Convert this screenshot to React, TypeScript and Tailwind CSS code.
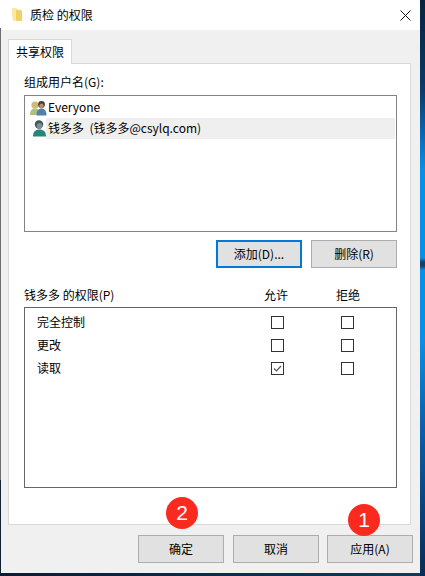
const font = { fontFamily: '"Noto Sans CJK SC", "Noto Sans", sans-serif' };

function FolderIcon() {
  return (
    <svg width="10" height="14" viewBox="0 0 10 14" className="shrink-0">
      <path d="M0 0h4l1 2h4l1 1v10H1z" fill="#f3cf68" />
      <path d="M0 0h4v13H1z" fill="#fbe7a6" />
    </svg>
  );
}

function EveryoneIcon() {
  return (
    <svg width="17" height="16" viewBox="0 0 17 16" className="shrink-0">
      <circle cx="5" cy="5" r="3.6" fill="#d3b873" />
      <path d="M0 15c0-5 2-6.500 5-6.500S10 10 10 15z" fill="#aebf80" />
      <circle cx="11.500" cy="4.500" r="3.400" fill="#3f4044" />
      <ellipse cx="11.500" cy="6" rx="2.200" ry="2.400" fill="#c08a5c" />
      <path d="M6.500 15.500c0-5 2-7 5-7s5 2 5 7z" fill="#4f81ad" />
    </svg>
  );
}

function UserIcon() {
  return (
    <svg width="13" height="17" viewBox="0 0 13 17" className="shrink-0">
      <circle cx="6" cy="4.500" r="4.200" fill="#3e5560" />
      <ellipse cx="6.500" cy="6" rx="2.800" ry="3" fill="#7f8f8c" />
      <path d="M0 16.500c0-5 2.500-7 6.500-7s6.500 2 6.500 7z" fill="#27857c" />
    </svg>
  );
}

function Checkbox({ checked }: { checked?: boolean }) {
  return (
    <div className="flex h-[13px] w-[13px] shrink-0 items-center justify-center border border-[#333333] bg-white">
      {checked && (
        <svg width="11" height="11" viewBox="0 0 11 11">
          <path d="M2 5.500 4.500 8 9 3" fill="none" stroke="#555555" strokeWidth="1.200" />
        </svg>
      )}
    </div>
  );
}

function Button({ label, focused }: { label: string; focused?: boolean }) {
  return (
    <div
      className={
        focused
          ? 'flex h-[28px] w-[86px] items-center justify-center border-2 border-[#0078d7] bg-[#e1e1e1] text-[12px] text-black'
          : 'flex h-[28px] w-[86px] items-center justify-center border border-[#adadad] bg-[#e1e1e1] text-[12px] text-black'
      }
    >
      {label}
    </div>
  );
}

function Badge({ n, className }: { n: string; className: string }) {
  return (
    <div
      className={`absolute flex h-[32px] w-[32px] items-center justify-center rounded-full bg-[#fb2a1f] font-['Liberation_Sans',sans-serif] text-[21px] text-white ${className}`}
    >
      {n}
    </div>
  );
}

const rows = [
  { name: '完全控制', checked: false },
  { name: '更改', checked: false },
  { name: '读取', checked: true },
];

export default function App() {
  return (
    <div className="relative flex h-[576px] w-[425px] overflow-hidden" style={font}>
      <div className="h-full w-[1px] bg-[linear-gradient(to_bottom,#ffffff_0,#ffffff_28px,#6e6e6e_28px,#6e6e6e_480px,#16243a_480px,#0c1c30_100%)]" />

      <div className="flex w-[419px] flex-col">
        <div className="flex h-[573px] flex-col bg-[#f0f0f0]">
          <div className="flex h-[30px] items-center bg-white pl-[11px] pr-[9px]">
            <FolderIcon />
            <span className="ml-[8px] whitespace-pre text-[12px] text-black">质检 的权限</span>
            <svg width="11" height="11" viewBox="0 0 11 11" className="ml-auto">
              <path d="M.5.5l10 10M10.500.5l-10 10" stroke="#111111" strokeWidth="1" />
            </svg>
          </div>

          <div className="ml-[7px] mt-[9px] flex">
            <div className="z-10 -mb-px flex h-[25px] w-[64px] items-center justify-center border border-b-0 border-[#d9d9d9] bg-white text-[12px] text-black">
              共享权限
            </div>
          </div>

          <div className="ml-[7px] flex h-[462px] w-[403px] flex-col border border-[#d9d9d9] bg-white pl-[15px] pr-[13px] pt-[8px]">
            <div className="h-[23px] text-[12px] leading-[20px] text-black">组成用户名(G):</div>
            <div className="flex h-[137px] flex-col border border-[#82828c] px-[1px] pt-[1px]">
              <div className="flex h-[21px] items-center pl-[4px] text-[12px] text-black">
                <EveryoneIcon />
                <span className="ml-[1px] pb-[2px]">Everyone</span>
              </div>
              <div className="flex h-[21px] items-center">
                <div className="w-[20px] shrink-0 pl-[7px]">
                  <UserIcon />
                </div>
                <div className="flex h-full flex-1 items-center whitespace-pre bg-[#efefef] pb-[1px] pl-[2px] text-[12px] text-black">钱多多  (钱多多@csylq.com)</div>
              </div>
            </div>
            <div className="mt-[8px] flex justify-end gap-[9px]">
              <Button label="添加(D)..." focused />
              <Button label="删除(R)" />
            </div>

            <div className="mt-[16px] flex h-[23px] items-center pb-[2px] text-[12px] text-black">
              <span className="w-[240px] whitespace-pre">钱多多 的权限(P)</span>
              <span className="w-[24px]">允许</span>
              <span className="ml-[48px] w-[24px]">拒绝</span>
            </div>
            <div className="flex h-[181px] flex-col border border-[#666666] pt-[3px]">
              {rows.map((row) => (
                <div key={row.name} className="flex h-[23px] items-center text-[12px] text-black">
                  <span className="ml-[12px] w-[234px] pb-[2px]">{row.name}</span>
                  <Checkbox checked={row.checked} />
                  <div className="ml-[57px]">
                    <Checkbox />
                  </div>
                </div>
              ))}
            </div>
          </div>

          <div className="mt-[10px] flex pl-[137px]">
            <Button label="确定" />
            <div className="ml-[9px]">
              <Button label="取消" />
            </div>
            <div className="ml-[8px]">
              <Button label="应用(A)" />
            </div>
          </div>
        </div>
        <div className="h-[3px] bg-gradient-to-r from-[#0c1c30] to-[#0b3a66]" />
      </div>

      <div className="h-full w-[5px] bg-[linear-gradient(to_bottom,#082340_0,#0a3a68_90px,#0a62b0_130px,#0a8fe8_170px,#0a8fe8_258px,#12406e_262px,#12406e_266px,#0a8fe8_270px,#0a8fe8_340px,#0a62b0_420px,#0a3f78_520px,#0b2c50_100%)]" />

      <Badge n="2" className="left-[166px] top-[497px]" />
      <Badge n="1" className="left-[348px] top-[504px]" />
    </div>
  );
}
